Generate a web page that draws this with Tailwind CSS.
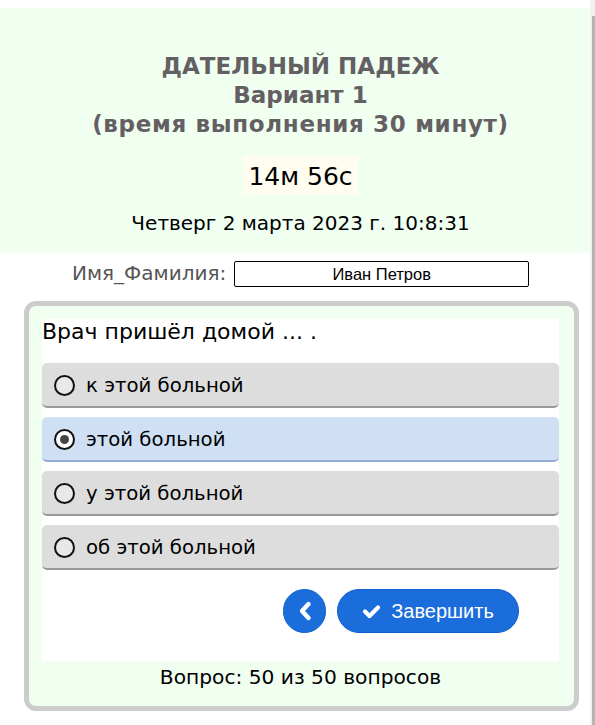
<!DOCTYPE html>
<html lang="ru">
<head>
    <meta charset="UTF-8">
    <meta name="viewport" content="width=device-width, initial-scale=1.0">
    <title>Дательный падеж</title>
    <script src="https://cdn.jsdelivr.net/npm/@tailwindcss/browser@4"></script>
</head>
<body class="bg-white h-[725px] overflow-hidden font-['DejaVu_Sans',sans-serif] flex">
    <main class="w-[590px] pt-2">
        <header class="bg-[#f0fff0] h-[245px] pt-[44px] pl-[11px] flex flex-col items-center">
            <h1 class="text-[23px] leading-[29px] font-bold text-[#635f63] text-center">
                ДАТЕЛЬНЫЙ ПАДЕЖ<br>Вариант 1<br><span class="tracking-[0.67px]">(время выполнения 30 минут)</span>
            </h1>
            <div class="mt-[17px] h-[39px] px-[5px] bg-[#fffdf0] text-[25px] leading-[41px] text-black">14м 56с</div>
            <div class="mt-[15px] text-[20px] leading-[26px] text-black">Четверг 2 марта 2023 г. 10:8:31</div>
        </header>

        <div class="flex items-start h-[40px] pt-[8px] pl-[72px] gap-[8px]">
            <label class="text-[20px] leading-[24px] text-[#555]" for="name">Имя_Фамилия:</label>
            <input id="name" class="w-[295px] h-[26px] bg-white border border-black rounded-[2px] text-center text-[16.5px] text-black font-['Liberation_Sans',sans-serif]" value="Иван Петров">
        </div>

        <section class="ml-[24px] mt-[8px] w-[555px] h-[410px] border-[5px] border-[#cccccc] rounded-[12px] bg-[#f0fff0] pt-[13px] pl-[13px] pr-[15px] flex flex-col">
            <div class="bg-white h-[342px] flex flex-col">
                <p class="text-[22px] leading-[26px] text-black">Врач пришёл домой ... .</p>
                <div class="mt-[18px] flex flex-col gap-[9px]">
                    <div class="h-[45px] pt-[2px] rounded-[5px] bg-[#dddddd] border-b-[2px] border-[#999999] flex items-center pl-[12px] gap-[11px] text-[19.7px] text-black">
                        <span class="w-[21px] h-[21px] rounded-full border-[2.5px] border-[#111] bg-[#e8e8e8]"></span>к этой больной
                    </div>
                    <div class="h-[45px] pt-[2px] rounded-[5px] bg-[#cfe0f5] border-b-[2px] border-[#93acd3] flex items-center pl-[12px] gap-[11px] text-[19.7px] text-black">
                        <span class="w-[21px] h-[21px] rounded-full border-[2.5px] border-[#111] bg-white flex items-center justify-center"><span class="w-[9px] h-[9px] rounded-full bg-[#444]"></span></span>этой больной
                    </div>
                    <div class="h-[45px] pt-[2px] rounded-[5px] bg-[#dddddd] border-b-[2px] border-[#999999] flex items-center pl-[12px] gap-[11px] text-[19.7px] text-black">
                        <span class="w-[21px] h-[21px] rounded-full border-[2.5px] border-[#111] bg-[#e8e8e8]"></span>у этой больной
                    </div>
                    <div class="h-[45px] pt-[2px] rounded-[5px] bg-[#dddddd] border-b-[2px] border-[#999999] flex items-center pl-[12px] gap-[11px] text-[19.7px] text-black">
                        <span class="w-[21px] h-[21px] rounded-full border-[2.5px] border-[#111] bg-[#e8e8e8]"></span>об этой больной
                    </div>
                </div>
                <div class="mt-[19px] pl-[241px] flex items-center gap-[11px]">
                    <button class="w-[43px] h-[44px] rounded-full bg-[#1b6ddb] border border-[#0f5fd0] flex items-center justify-center">
                        <svg width="16" height="22" viewBox="0 0 16 22" fill="none"><path d="M11.5 4L5 11l6.5 7" stroke="#fff" stroke-width="4.4" stroke-linecap="round" stroke-linejoin="round"/></svg>
                    </button>
                    <button class="w-[182px] h-[44px] rounded-full bg-[#1b6ddb] border border-[#0f5fd0] flex items-center justify-center gap-[10px] text-white text-[20px] font-['Liberation_Sans',sans-serif]">
                        <svg width="19" height="15" viewBox="0 0 19 15" fill="none"><path d="M3 7.5l4.5 4.5L16 3.5" stroke="#fff" stroke-width="4.2" stroke-linecap="round" stroke-linejoin="round"/></svg>
                        Завершить
                    </button>
                </div>
            </div>
            <p class="text-center text-[20.2px] leading-[32px] text-black">Вопрос: 50 из 50 вопросов</p>
        </section>
    </main>

    <div class="w-[5px] bg-[#f1f1f1] pt-[16px] pl-[2px]">
        <div class="h-[709px] bg-[#b5b5b5]"></div>
    </div>
</body>
</html>
